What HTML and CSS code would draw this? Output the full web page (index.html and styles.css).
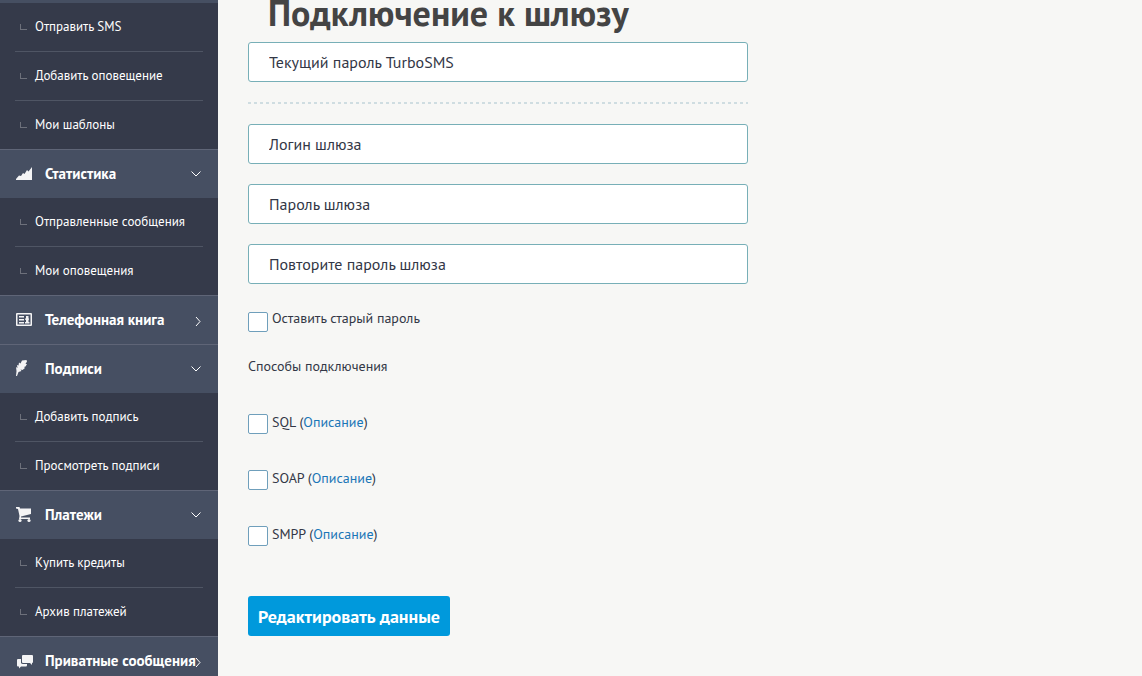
FILE: index.html
```html
<!DOCTYPE html>
<html lang="ru">
<head>
<meta charset="utf-8">
<title>Подключение к шлюзу</title>
<link rel="stylesheet" href="styles.css">
</head>
<body>
<div class="page">
  <nav class="sidebar" aria-label="Меню">
    <ul class="submenu">
      <li><a href="#">Отправить SMS</a></li>
      <li><a href="#">Добавить оповещение</a></li>
      <li><a href="#">Мои шаблоны</a></li>
    </ul>
    <a class="section" href="#">
      <svg class="icon" viewBox="0 0 18 18"><path d="M1 15V14L4 10.500L6 11L8 8L9.500 9L12 5L13.500 6.500L17 2V15Z"/></svg>
      <span class="title">Статистика</span>
      <svg class="arrow" viewBox="0 0 10 10"><path d="M.5 2.500L5 7L9.500 2.500"/></svg>
    </a>
    <ul class="submenu">
      <li><a href="#">Отправленные сообщения</a></li>
      <li><a href="#">Мои оповещения</a></li>
    </ul>
    <a class="section" href="#">
      <svg class="icon" viewBox="0 0 18 18"><path fill-rule="evenodd" d="M2 2H16Q17 2 17 3V14Q17 15 16 15H2Q1 15 1 14V3Q1 2 2 2ZM2.500 3.500V13.500H15.500V3.500Z"/><path d="M4 5H9V6.500H4ZM4 8H9V9.500H4ZM4 11H9V12.500H4ZM10 11H11V9L10 8.500V7.500H11V5H13.500V7.500H14V8.500L13.500 9V11H14.500V12.500H10Z"/></svg>
      <span class="title">Телефонная книга</span>
      <svg class="arrow" viewBox="0 0 10 10"><path d="M5 2L9 6.500L5 11"/></svg>
    </a>
    <a class="section" href="#">
      <svg class="icon" viewBox="0 0 18 18"><path d="M1 16L1.500 11L1 7L2.500 8L2 5L3.500 5.500L4 2.500L5.500 3.500L7 .5L11.500 0L12 1.500L10.500 4H12L10.500 6.500L9 7L10 8L7.500 10L5.500 9.500L6.500 11L3.500 12L2 16Z"/></svg>
      <span class="title">Подписи</span>
      <svg class="arrow" viewBox="0 0 10 10"><path d="M.5 2.500L5 7L9.500 2.500"/></svg>
    </a>
    <ul class="submenu">
      <li><a href="#">Добавить подпись</a></li>
      <li><a href="#">Просмотреть подписи</a></li>
    </ul>
    <a class="section" href="#">
      <svg class="icon" viewBox="0 0 18 18"><path d="M1 1H4.500L5 2.500H16V8L6 10.500V11.500H15V13H4L4.500 10L3 3L1 2.500Z"/><circle cx="5" cy="14.500" r="1.600"/><circle cx="14" cy="14.500" r="1.600"/></svg>
      <span class="title">Платежи</span>
      <svg class="arrow" viewBox="0 0 10 10"><path d="M.5 2.500L5 7L9.500 2.500"/></svg>
    </a>
    <ul class="submenu">
      <li><a href="#">Купить кредиты</a></li>
      <li><a href="#">Архив платежей</a></li>
    </ul>
    <a class="section" href="#">
      <svg class="icon" viewBox="0 0 18 18"><path d="M8 3H17Q18 3 18 4V10Q18 11 17 11V13L15 11H8Q7 11 7 10V4Q7 3 8 3Z"/><path d="M3 7H6V11Q6.500 12 8 12H12V13Q12 14.500 11 14.500H6L4 16.500V14.500H3Q2 14.500 2 13.500V8Q2 7 3 7Z"/></svg>
      <span class="title">Приватные сообщения</span>
      <svg class="arrow" viewBox="0 0 10 10"><path d="M5 2L9 6.500L5 11"/></svg>
    </a>
  </nav>
  <main class="content">
    <h1>Подключение к шлюзу</h1>
    <form class="form">
      <input class="field" type="password" aria-label="Текущий пароль TurboSMS" placeholder="Текущий пароль TurboSMS">
      <hr class="divider">
      <input class="field" type="text" aria-label="Логин шлюза" placeholder="Логин шлюза">
      <input class="field" type="password" aria-label="Пароль шлюза" placeholder="Пароль шлюза">
      <input class="field" type="password" aria-label="Повторите пароль шлюза" placeholder="Повторите пароль шлюза">
      <div class="check keep"><input type="checkbox" id="keep"><label for="keep">Оставить старый пароль</label></div>
      <fieldset class="methods">
        <legend>Способы подключения</legend>
        <div class="check"><input type="checkbox" id="sql"><label for="sql">SQL (<a href="#">Описание</a>)</label></div>
        <div class="check"><input type="checkbox" id="soap"><label for="soap">SOAP (<a href="#">Описание</a>)</label></div>
        <div class="check"><input type="checkbox" id="smpp"><label for="smpp">SMPP (<a href="#">Описание</a>)</label></div>
      </fieldset>
      <button class="submit" type="submit">Редактировать данные</button>
    </form>
  </main>
</div>
</body>
</html>
```
FILE: styles.css
```css
* { box-sizing: border-box; }
body {
  margin: 0;
  background: #f7f7f5;
  color: #333746;
  font: 14px/20px "PT Sans", "Noto Sans", sans-serif;
}
.page { display: flex; height: 100vh; overflow: hidden; }
.sidebar {
  flex: none;
  width: 218px;
  border-top: 3px solid #464f62;
  background: #353a4a;
}
.sidebar a { color: #fff; text-decoration: none; }
.submenu { margin: 0; padding: 0 15px; list-style: none; }
.submenu li + li { border-top: 1px solid #4f5564; }
.submenu a {
  display: flex;
  align-items: center;
  gap: 8px;
  height: 48px;
  padding-left: 5px;
  font-size: 13px;
  white-space: nowrap;
}
.submenu a::before {
  content: "";
  width: 6px;
  height: 5px;
  border: solid #6d707b;
  border-width: 0 0 1px 1px;
}
.section {
  display: flex;
  align-items: center;
  height: 49px;
  padding: 0 17px 0 15px;
  border-top: 1px solid #5f6577;
  background: #464f62;
  font-size: 15px;
  font-weight: 700;
  white-space: nowrap;
}
.icon { flex: none; width: 18px; height: 18px; margin-right: 12px; fill: #f4f4f5; }
.title { flex: 1; min-width: 0; }
.arrow {
  flex: none;
  width: 10px;
  height: 10px;
  overflow: visible;
  fill: none;
  stroke: #fff;
}
.content { flex: 1; padding: 0 30px; }
h1 {
  margin: 0;
  padding: 0 20px 16px;
  color: #444;
  font-size: 36px;
  line-height: 26px;
  white-space: nowrap;
}
.form { display: flex; flex-direction: column; gap: 20px; max-width: 500px; }
.field {
  width: 100%;
  height: 40px;
  padding: 0 20px;
  border: 1px solid #77afb7;
  border-radius: 3px;
  background: #fff;
  color: #333746;
  font: 16px "PT Sans", "Noto Sans", sans-serif;
}
.field::placeholder { color: #333746; opacity: 1; }
.divider {
  width: 100%;
  height: 2px;
  margin: 0;
  border: 0;
  background: repeating-linear-gradient(90deg, #cfdde1 0 3px, transparent 3px 6px);
}
.check { display: flex; gap: 4px; height: 28px; white-space: nowrap; }
.check input {
  appearance: none;
  width: 20px;
  height: 20px;
  margin: 2px 0 0;
  border: 1px solid #6f9fbb;
  border-radius: 2px;
  background: #fff;
}
.keep { margin-top: 4px; }
.keep input { margin-top: 4px; }
.check a { color: #1a76b7; text-decoration: none; }
.methods {
  display: flex;
  flex-direction: column;
  gap: 28px;
  margin: 0;
  padding: 0;
  border: 0;
}
.methods legend { margin-bottom: 36px; padding: 0; }
.submit {
  align-self: flex-start;
  height: 40px;
  margin-top: 24px;
  padding: 0 10px;
  border: 0;
  border-radius: 3px;
  background: #0099dc;
  color: #fff;
  font: 700 18px "PT Sans", "Noto Sans", sans-serif;
}
```
